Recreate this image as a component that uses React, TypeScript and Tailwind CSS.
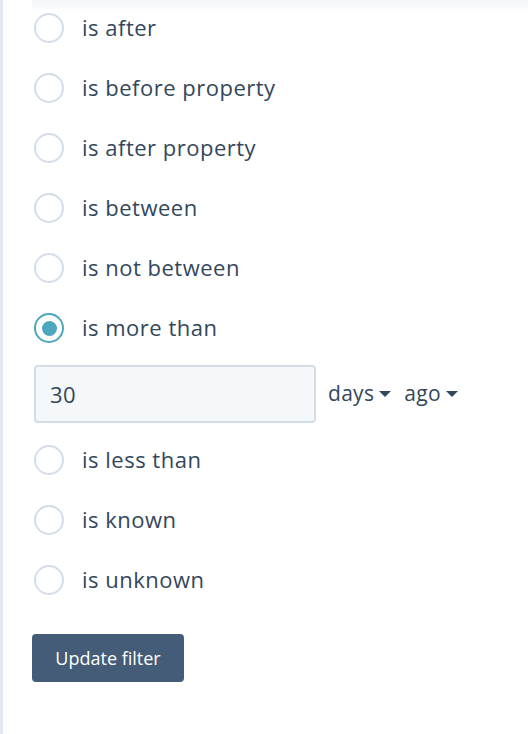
import React from "react";

const font = { fontFamily: "'Open Sans', 'Noto Sans', sans-serif" };

function Radio({ checked }: { checked?: boolean }) {
  return checked ? (
    <span className="ml-[2px] flex h-[30px] w-[30px] shrink-0 items-center justify-center rounded-full border-2 border-[#4ca6bf] bg-white">
      <span className="h-[15px] w-[15px] rounded-full bg-[#4ca6bf]" />
    </span>
  ) : (
    <span className="ml-[2px] h-[30px] w-[30px] shrink-0 rounded-full border-2 border-[#d3dde8] bg-white" />
  );
}

function Row({ label, checked }: { label: string; checked?: boolean }) {
  return (
    <div className="flex h-[30px] items-center gap-[18px]">
      <Radio checked={checked} />
      <span className="-mt-[2px] text-[22px] leading-none tracking-[0.5px] text-[#33475b]">{label}</span>
    </div>
  );
}

function Caret() {
  return (
    <svg width="12" height="6" viewBox="0 0 12 6" className="ml-[5px]">
      <path d="M0 0 L12 0 L6 6 Z" fill="#33475b" />
    </svg>
  );
}

export default function App() {
  return (
    <div className="relative min-h-[734px] w-[528px] overflow-hidden border-l-[3px] border-[#e3e7ee] bg-white" style={font}>
      <div className="pointer-events-none absolute left-[29px] right-0 top-0 h-[12px] bg-gradient-to-b from-[#f2f4f9] to-white/0" />
      <div className="flex flex-col pl-[29px] pt-[13px]">
        <div className="flex flex-col gap-[30px]">
          <Row label="is after" />
          <Row label="is before property" />
          <Row label="is after property" />
          <Row label="is between" />
          <Row label="is not between" />
          <Row label="is more than" checked />
        </div>
        <div className="mt-[22px] flex items-center">
          <div className="ml-[2px] flex h-[58px] w-[282px] items-center rounded-[4px] border-2 border-[#d3dde8] bg-[#f5f8fa] pl-[14px] text-[22px] tracking-[0.5px] text-[#33475b]">
            30
          </div>
          <div className="ml-[12px] flex items-center text-[21px] tracking-[0.3px] text-[#33475b]">
            <span>days</span>
            <Caret />
            <span className="ml-[13px]">ago</span>
            <Caret />
          </div>
        </div>
        <div className="mt-[22px] flex flex-col gap-[30px]">
          <Row label="is less than" />
          <Row label="is known" />
          <Row label="is unknown" />
        </div>
        <button className="mt-[39px] flex h-[48px] w-[152px] items-center justify-center rounded-[4px] bg-[#445c77] text-[18px] text-white">
          Update filter
        </button>
      </div>
    </div>
  );
}
